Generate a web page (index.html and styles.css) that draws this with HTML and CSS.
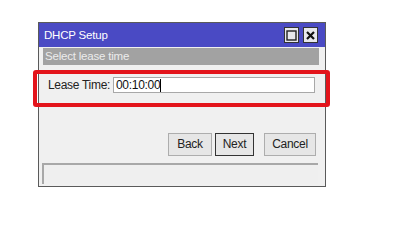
FILE: index.html
```html
<!DOCTYPE html>
<html>
<head>
<meta charset="utf-8">
<link rel="stylesheet" href="styles.css">
</head>
<body>
<div class="window">
  <div class="titlebar">
    <span class="title">DHCP Setup</span>
    <div class="tbtns">
      <span class="tbtn"><svg width="11" height="11" viewBox="0 0 11 11"><rect x="1" y="1" width="9" height="9" fill="none" stroke="#222" stroke-width="1.4"/></svg></span>
      <span class="tbtn"><svg width="11" height="11" viewBox="0 0 11 11"><path d="M2 2 L9 9 M9 2 L2 9" stroke="#111" stroke-width="2.2"/></svg></span>
    </div>
  </div>
  <div class="subhead">Select lease time</div>
  <div class="row">
    <label class="label">Lease Time:</label>
    <div class="input"><span>00:10:00</span><span class="caret"></span></div>
  </div>
  <div class="buttons">
    <span class="btn back">Back</span>
    <span class="btn next">Next</span>
    <span class="btn cancel">Cancel</span>
  </div>
  <div class="status"></div>
  <div class="highlight"></div>
</div>
</body>
</html>
```
FILE: styles.css
```css
html, body { margin: 0; padding: 0; background: #fff; }
body { width: 400px; height: 211px; overflow: hidden; font-family: "Liberation Sans", Arial, sans-serif; }
.window {
  position: relative;
  margin: 22px 0 0 38px;
  width: 286px;
  height: 163px;
  border: 1px solid #5a5a5a;
  background: #f0f0f0;
  display: flex;
  flex-direction: column;
}
.titlebar {
  height: 24px;
  background: #4a4ac4;
  display: flex;
  align-items: center;
  justify-content: space-between;
  padding: 0 7px 0 5px;
}
.title { color: #fff; font-size: 11.5px; letter-spacing: -0.2px; }
.tbtns { display: flex; gap: 4px; }
.tbtn {
  width: 13px; height: 14px;
  background: #e8e8ec;
  border: 1px solid #333;
  display: flex; align-items: center; justify-content: center;
}
.subhead {
  margin: 1px 6px 0 4px;
  height: 17px;
  background: #a2a2a2;
  color: #ececec;
  font-size: 11.5px;
  line-height: 17px;
  padding-left: 2px;
  letter-spacing: -0.2px;
}
.row {
  display: flex;
  align-items: center;
  padding: 12px 0 0 9px;
  height: 16px;
}
.label { font-size: 12px; color: #222; width: 65px; flex-shrink: 0; white-space: nowrap; letter-spacing: -0.3px; }
.input {
  width: 198px; height: 14px;
  flex-shrink: 0;
  border: 1px solid #a8a8a8;
  background: #fff;
  font-size: 12px;
  line-height: 14px;
  color: #111;
  padding-left: 2px;
  display: flex; align-items: center;
  letter-spacing: -0.3px;
}
.caret { width: 1px; height: 13px; background: #000; }
.buttons {
  display: flex;
  justify-content: flex-end;
  padding: 40px 9px 0 0;
}
.btn {
  height: 21px;
  border: 1px solid #adadad;
  background: #e6e6e6;
  font-size: 12px;
  line-height: 21px;
  color: #222;
  text-align: center;
  letter-spacing: -0.3px;
}
.back { width: 42px; }
.next { width: 37px; margin-left: 3px; border-color: #333; }
.cancel { width: 50px; margin-left: 10px; }
.status {
  margin: 7px 7px 0 3px;
  height: 19px;
  border-top: 2px solid #a8a8a8;
  border-left: 2px solid #a8a8a8;
  background: #efefef;
}
.highlight {
  position: absolute;
  left: -6px; top: 47px;
  width: 289px; height: 29px;
  border: 4px solid #e3141b;
  border-radius: 3px;
}
```
